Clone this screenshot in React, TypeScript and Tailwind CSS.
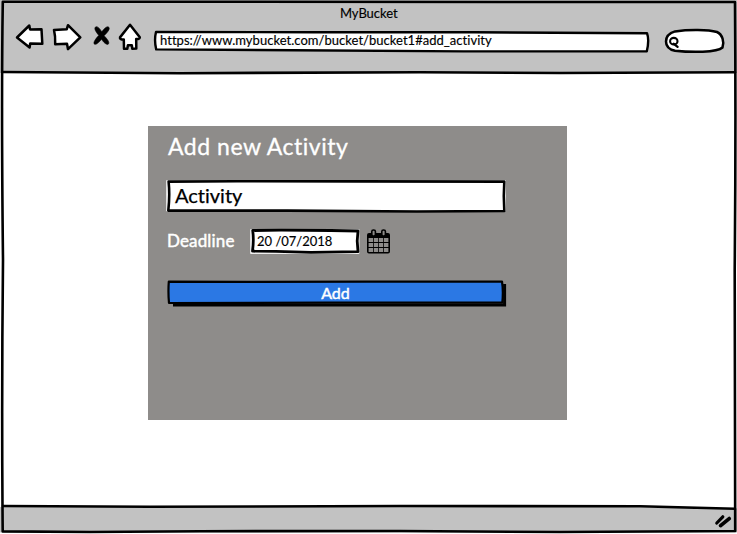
import type { ReactNode } from "react";

type SketchProps = { w: number; h: number; children: ReactNode };

function Sketch({ w, h, children }: SketchProps) {
  return (
    <svg
      className="pointer-events-none absolute left-0 top-0 overflow-visible"
      width={w}
      height={h}
      viewBox={`0 0 ${w} ${h}`}
      fill="none"
      stroke="#000"
      strokeLinejoin="round"
      strokeLinecap="round"
      aria-hidden="true"
    >
      {children}
    </svg>
  );
}

function NavIcons() {
  return (
    <svg
      className="mt-[18px] ml-[12px] shrink-0"
      width="136"
      height="38"
      viewBox="12 18 136 38"
      fill="#fff"
      stroke="#000"
      strokeWidth="2.5"
      strokeLinejoin="round"
      aria-hidden="true"
    >
      <path d="M17 37.5 L29.3 25.5 L30 29.4 L41.5 29.2 L42.3 43.8 L30.2 43.5 L29.6 47.5 Z" />
      <path d="M54 30 L66.8 29.2 L68 25.2 L80.3 37.3 L68 49.2 L67 43.8 L55.2 44.2 Q55.5 36 54 30 Z" />
      <path
        d="M95.3 27.2 C94.2 28.6 95.2 31.2 98.8 35.3 C95.1 39.4 93.4 42.3 94.1 43.8 C95.4 45.6 98.7 42.8 101.5 39.3 C104 43.1 107.4 45.6 108.6 43.8 C109.6 41.8 107.1 38.9 104.1 35.7 C107.7 32.1 110 29.3 109 27.4 C107.1 25.4 104.3 28.6 101.7 31.8 C99.5 27.9 96.8 25.5 95.3 27.2 Z"
        fill="#000"
        strokeWidth="0.6"
      />
      <path d="M130 24.8 L139.8 37.3 C139.7 38.8 138 39.2 136.2 39 L136.3 48.6 L132.3 48.7 L131.8 45.2 L127.9 45.2 L127.3 48.7 L124 48.8 L123.8 39.6 C121.5 39.7 119.5 39.2 120 37.4 Z" />
    </svg>
  );
}

function CalendarIcon() {
  return (
    <svg
      className="absolute left-[219px] top-[103px]"
      width="23"
      height="25"
      viewBox="0 0 23 25"
      fill="none"
      aria-hidden="true"
    >
      <path d="M0 6 Q0 4 2 4 H21 Q23 4 23 6 V22.5 Q23 24.5 21 24.5 H2 Q0 24.5 0 22.5 Z M1.6 9 V23 H21.4 V9 Z" fill="#000" fillRule="evenodd" />
      <path d="M6.5 9 V23 M11.5 9 V23 M16.5 9 V23" stroke="#000" strokeWidth="0.8" />
      <path d="M1 13.5 H22 M1 18.5 H22" stroke="#000" strokeWidth="1" />
      <rect x="4.8" y="1" width="3.6" height="6" rx="1.6" fill="#8e8c8a" stroke="#000" strokeWidth="1.6" />
      <rect x="14.8" y="1" width="3.6" height="6" rx="1.6" fill="#8e8c8a" stroke="#000" strokeWidth="1.6" />
    </svg>
  );
}

export default function App() {
  return (
    <div className="relative flex h-[534px] w-[737px] flex-col overflow-hidden bg-white font-['Lato','Open_Sans',sans-serif] text-black [font-variant-ligatures:none]">
      <header className="relative flex h-[73px] shrink-0 items-start bg-[#c2c2c2]">
        <h1 className="absolute left-[340px] top-[5px] whitespace-nowrap text-[13px] leading-[17px] tracking-[-0.05px] [-webkit-text-stroke:0.15px]">
          MyBucket
        </h1>
        <NavIcons />
        <div className="relative mt-[31px] ml-[6px] h-[21px] w-[496px] shrink-0">
          <Sketch w={496} h={21}>
            <path
              d="M2 1 L160 1.2 L320 1.3 L493 2.2 Q495.5 9 492.8 20.2 L310 20.4 L140 19.3 L2.2 18.4 Q0 9 2 1 Z"
              fill="#fff"
              strokeWidth="2.4"
            />
          </Sketch>
          <span className="relative block pl-[6px] text-[13px] leading-[19px] whitespace-nowrap tracking-[0.03px] [-webkit-text-stroke:0.15px]">
            https://www.mybucket.com/bucket/bucket1#add_activity
          </span>
        </div>
        <div className="relative mt-[29px] ml-[15px] h-[24px] w-[60px] shrink-0">
          <Sketch w={60} h={24}>
            <path
              d="M10 2.4 C24 .4 43 .5 52 3 C57.5 5.5 59.5 13 57.5 18.5 C52 23.7 26 23.5 10 21.7 C-2 19 -2 6 10 2.4 Z"
              fill="#fff"
              strokeWidth="2.5"
            />
            <ellipse cx="8.8" cy="12.2" rx="3.7" ry="3.3" strokeWidth="2.1" />
            <path d="M8.8 14.8 L12.6 17.8" strokeWidth="2.3" />
          </Sketch>
        </div>
      </header>

      <main className="flex grow items-start pt-[53px] pl-[148px]">
        <section className="relative h-[294px] w-[419px] bg-[#8e8c8a] pt-[5px] pl-[19px]">
          <h2 className="h-[30px] pl-px text-[23px] leading-[30px] whitespace-nowrap text-white tracking-[0.52px] [-webkit-text-stroke:0.3px]">
            Add new Activity
          </h2>
          <div className="relative mt-[19px] h-[33px] w-[339px] pl-[8px]">
            <Sketch w={339} h={33}>
              <path d="M0 .5 H338.5 V31 H0 Z" fill="#fff" stroke="#eee" strokeWidth="1" />
              <path
                d="M1.6 1.6 L70 1.3 L190 1.4 L337.3 1.6 L336.8 16 L337.3 31 L250 31.5 L120 30.6 L1.3 30.6 Q3 15 1.6 1.6 Z"
                fill="#fff"
                strokeWidth="2.6"
              />
            </Sketch>
            <span className="relative block text-[20px] leading-[31px] [-webkit-text-stroke:0.25px]">Activity</span>
          </div>
          <div className="mt-[16px] flex h-[25px] items-start">
            <label className="w-[84px] text-[17px] leading-[24px] whitespace-nowrap text-white tracking-[0.15px] [-webkit-text-stroke:0.45px]">
              Deadline
            </label>
            <div className="relative h-[25px] w-[109px] pl-[6px]">
              <Sketch w={109} h={25}>
                <path d="M0 .5 H108 V24.5 H0 Z" fill="#fff" stroke="#eee" strokeWidth="1" />
                <path
                  d="M1.7 1.5 L30 1.2 L80 1.5 L107 2 L106.2 12 L107 22.6 L60 23.4 L25 22.4 L1.5 22.2 Q3 11 1.7 1.5 Z"
                  fill="#fff"
                  strokeWidth="2.8"
                />
              </Sketch>
              <span className="relative block text-[13px] leading-[24px] whitespace-nowrap [-webkit-text-stroke:0.15px]">
                20 /07/2018
              </span>
            </div>
          </div>
          <CalendarIcon />
          <button className="relative mt-[26px] block h-[26px] w-[339px]">
            <Sketch w={339} h={26}>
              <path d="M6 24.9 H337.6 V4" strokeWidth="3" strokeLinecap="butt" strokeLinejoin="miter" />
              <path
                d="M1.8 1.6 L80 1.8 L200 1.6 L335 1.5 Q336.5 11 335.3 22.6 L160 22.6 L2 23 Q1 12 1.8 1.6 Z"
                fill="#2b78e4"
                strokeWidth="2.2"
              />
            </Sketch>
            <span className="relative block pr-[2px] text-center text-[16px] leading-[24px] text-white [-webkit-text-stroke:0.45px]">
              Add
            </span>
          </button>
        </section>
      </main>

      <footer className="h-[27px] shrink-0 bg-[#c2c2c2]" />

      <Sketch w={737} h={534}>
        <path d="M0 532.5 H737 V534 H0 Z" fill="#fff" stroke="none" />
        <path d="M600 504.5 L737 506 V509 L600 506.5 Z" fill="#fff" stroke="none" />
        <path
          d="M2.8 1.8 L250 1.8 L500 2 L735 2 Q736 130 734.7 270 L735.2 531 L560 532 L400 531 L200 531.2 L90 532 L2.7 531.4 Q1.5 400 3 260 Q1.2 100 2.8 1.8 Z"
          strokeWidth="2.6"
        />
        <path d="M3 72 L180 73.2 L420 72.3 L560 73 L735 72.3" strokeWidth="2.6" />
        <path d="M3 506 L150 506.8 L400 506 L640 506.2 L735 508.8" strokeWidth="2.6" />
        <path d="M716.8 523 L722.8 516.8" strokeWidth="3.2" />
        <path d="M720.6 525.6 L729.2 518.6" strokeWidth="3.8" />
      </Sketch>
    </div>
  );
}
